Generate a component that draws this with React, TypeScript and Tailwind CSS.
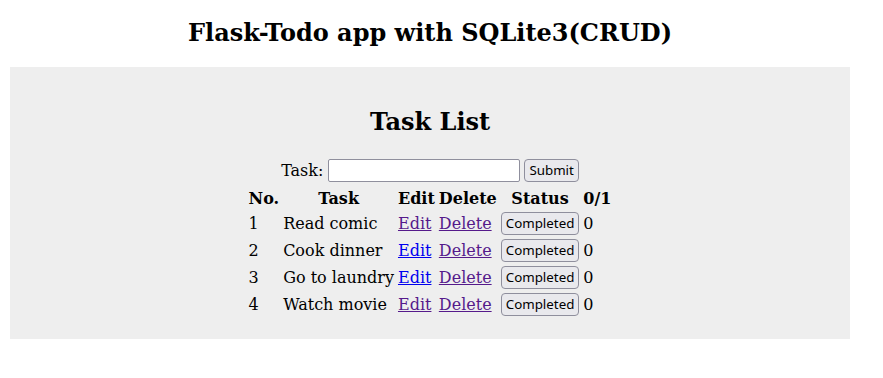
const tasks = [
  { id: 1, name: "Read comic", editVisited: true, done: 0 },
  { id: 2, name: "Cook dinner", editVisited: false, done: 0 },
  { id: 3, name: "Go to laundry", editVisited: false, done: 0 },
  { id: 4, name: "Watch movie", editVisited: true, done: 0 },
];

function Btn({ children, block }: { children: React.ReactNode; block?: boolean }) {
  return (
    <button
      className={`${block ? "block mx-auto" : ""} h-[23px] px-[4px] rounded-[4px] border border-[#8f8f9d] bg-[#e9e9ed] font-['Noto_Sans',sans-serif] text-[13.33px] leading-none text-black`}
    >
      {children}
    </button>
  );
}

export default function App() {
  return (
    <div className="w-[860px] font-['DejaVu_Serif',serif] text-[16px] leading-[normal] text-black bg-white">
      <h2 className="text-center text-[24px] font-bold leading-[28px] pt-[19px] pb-[20px]">
        Flask-Todo app with SQLite3(CRUD)
      </h2>
      <div className="mx-[10px] bg-[#eeeeee] p-[20px]">
        <h2 className="text-center text-[24px] font-bold leading-[28px] mt-[21px] mb-[23px]">
          Task List
        </h2>
        <form className="flex items-center justify-center h-[23px]" onSubmit={(e) => e.preventDefault()}>
          <label className="mr-[5px]">Task:</label>
          <input
            type="text"
            className="w-[192px] h-[23px] border border-[#8f8f9d] rounded-[2px] bg-white mr-[4px]"
          />
          <Btn>Submit</Btn>
        </form>
        <table className="mx-auto border-separate border-spacing-[2px] mt-[4px]">
          <thead>
            <tr>
              <th className="p-[1px] text-center font-bold">No.</th>
              <th className="p-[1px] text-center font-bold">Task</th>
              <th className="p-[1px] text-center font-bold">Edit</th>
              <th className="p-[1px] text-center font-bold">Delete</th>
              <th className="p-[1px] text-center font-bold">Status</th>
              <th className="p-[1px] text-center font-bold">0/1</th>
            </tr>
          </thead>
          <tbody>
            {tasks.map((t) => (
              <tr key={t.id}>
                <td className="p-[1px]">{t.id}</td>
                <td className="p-[1px]">{t.name}</td>
                <td className="p-[1px]">
                  <a
                    href="#"
                    className={`underline ${t.editVisited ? "text-[#551a8b]" : "text-[#0000ee]"}`}
                  >
                    Edit
                  </a>
                </td>
                <td className="p-[1px]">
                  <a href="#" className="underline text-[#551a8b]">
                    Delete
                  </a>
                </td>
                <td className="p-[1px]">
                  <Btn block>Completed</Btn>
                </td>
                <td className="p-[1px]">{t.done}</td>
              </tr>
            ))}
          </tbody>
        </table>
      </div>
    </div>
  );
}
